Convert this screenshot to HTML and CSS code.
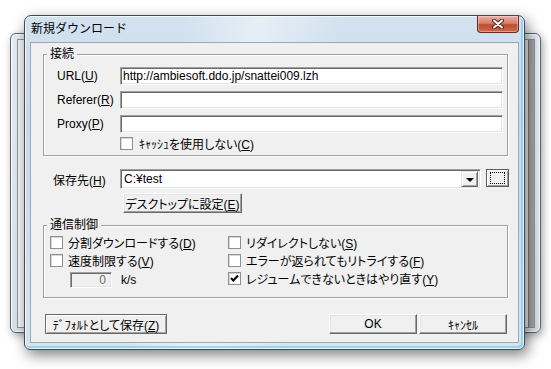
FILE: index.html
```html
<!DOCTYPE html>
<html lang="ja">
<head>
<meta charset="UTF-8">
<meta name="viewport" content="width=device-width, initial-scale=1.0">
<title>新規ダウンロード</title>
<link rel="stylesheet" href="styles.css">
</head>
<body>

<div class="desktop">
    <div class="window back">
        <div class="back-client">
            <div class="back-scroll"></div>
        </div>
    </div>

    <div class="window main">
        <div class="titlebar">
            <span class="title">新規ダウンロード</span>
            <button class="close" title="閉じる">
                <svg width="14" height="10" viewBox="0 0 14 10">
                    <path d="M3 1.5 L11 8.5 M11 1.5 L3 8.5" stroke="#4a2018" stroke-width="4" stroke-linecap="round"/>
                    <path d="M3 1.5 L11 8.5 M11 1.5 L3 8.5" stroke="#fff" stroke-width="2" stroke-linecap="round"/>
                </svg>
            </button>
        </div>

        <div class="client">
            <div class="group connect">
                <span class="group-title">接続</span>
                <div class="row">
                    <label class="lbl">URL(<u>U</u>)</label>
                    <input class="field" type="text" value="http://ambiesoft.ddo.jp/snattei009.lzh" readonly>
                </div>
                <div class="row">
                    <label class="lbl">Referer(<u>R</u>)</label>
                    <input class="field" type="text" value="" readonly>
                </div>
                <div class="row">
                    <label class="lbl">Proxy(<u>P</u>)</label>
                    <input class="field" type="text" value="" readonly>
                </div>
                <div class="row check-row">
                    <span class="box"></span>
                    <span>ｷｬｯｼｭを使用しない(<u>C</u>)</span>
                </div>
            </div>

            <div class="row save-row">
                <label class="lbl">保存先(<u>H</u>)</label>
                <div class="combo">
                    <span class="combo-text">C:¥test</span>
                    <span class="combo-btn"><span class="arrow"></span></span>
                </div>
                <button class="btn browse"><span class="focus"></span></button>
            </div>

            <button class="btn desk-btn">デスクトップに設定(<u>E</u>)</button>

            <div class="group comm">
                <span class="group-title">通信制御</span>
                <div class="comm-grid">
                    <div class="row check"><span class="box"></span><span>分割ダウンロードする(<u>D</u>)</span></div>
                    <div class="row check"><span class="box"></span><span>リダイレクトしない(<u>S</u>)</span></div>
                    <div class="row check"><span class="box"></span><span>速度制限する(<u>V</u>)</span></div>
                    <div class="row check"><span class="box"></span><span>エラーが返られてもリトライする(<u>F</u>)</span></div>
                    <div class="row speed">
                        <span class="field small">0</span>
                        <span class="unit">k/s</span>
                    </div>
                    <div class="row check">
                        <span class="box checked">
                            <svg width="11" height="11" viewBox="0 0 11 11"><path d="M2 5 L4.3 7.5 L9 2.5" fill="none" stroke="#000" stroke-width="2"/></svg>
                        </span>
                        <span>レジュームできないときはやり直す(<u>Y</u>)</span>
                    </div>
                </div>
            </div>

            <div class="footer">
                <button class="btn btn-default">ﾃﾞﾌｫﾙﾄとして保存(<u>Z</u>)</button>
                <div class="actions">
                    <button class="btn">OK</button>
                    <button class="btn">ｷｬﾝｾﾙ</button>
                </div>
            </div>
        </div>
    </div>
</div>

</body>
</html>
```

FILE: styles.css
```css
body {
    margin: 0;
    background-color: #fff;
    font-family: "Liberation Sans", "Noto Sans CJK JP", sans-serif;
    font-size: 12px;
    font-feature-settings: "palt";
    color: #000;
}

.desktop {
    position: relative;
    width: 551px;
    height: 369px;
    overflow: hidden;
}

.window {
    position: absolute;
    box-sizing: border-box;
}

/* window behind the dialog */
.back {
    left: 10px;
    top: 33px;
    width: 531px;
    height: 300px;
    border: 1px solid #5a636d;
    border-radius: 6px;
    padding: 5px 5px 4px 6px;
    display: flex;
    background: linear-gradient(#e6edf3, #d9e1e9);
    box-shadow: 2px 3px 9px rgba(0, 0, 0, 0.35), inset 0 0 0 1px rgba(255, 255, 255, 0.8);
}

.back-client {
    flex: 1;
    display: flex;
    justify-content: flex-end;
    border: 1px solid #8c98a4;
    background-color: #f4f4f4;
}

.back-scroll {
    width: 5px;
    background-color: #a7a7a7;
    border-left: 1px solid #7c7c7c;
}

/* the dialog */
.main {
    left: 24px;
    top: 15px;
    width: 501px;
    height: 335px;
    border: 1px solid #3e4a57;
    border-radius: 7px 7px 6px 6px;
    padding: 0 5px 6px;
    display: flex;
    flex-direction: column;
    background:
        linear-gradient(100deg, rgba(255, 255, 255, 0) 28%, rgba(255, 255, 255, 0.45) 42%, rgba(255, 255, 255, 0) 58%),
        linear-gradient(#d3e2f0, #c6d9ea 30%, #d4e4f1);
    box-shadow: 3px 5px 14px rgba(0, 0, 0, 0.5), inset 0 0 0 1px rgba(255, 255, 255, 0.75), inset -2px -2px 0 1px rgba(110, 196, 236, 0.55);
}

.titlebar {
    flex: none;
    height: 26px;
    display: flex;
    justify-content: space-between;
    align-items: flex-start;
}

.title {
    padding: 5px 0 0 1px;
    line-height: 14px;
    font-family: "Noto Sans CJK JP", sans-serif;
    font-feature-settings: normal;
    color: #000;
}

.close {
    width: 42px;
    height: 17px;
    padding: 0;
    border: 1px solid #6a2a1f;
    border-top: none;
    border-radius: 0 0 4px 4px;
    display: flex;
    align-items: center;
    justify-content: center;
    background: linear-gradient(#e8b0a4, #d77f6c 45%, #c04a33 55%, #cf6a4f);
    box-shadow: inset 0 0 0 1px rgba(255, 255, 255, 0.35);
}

.client {
    flex: 1;
    border: 1px solid #9aa9b8;
    background-color: #f0f0f0;
}

.row {
    display: flex;
    align-items: center;
}

.lbl {
    flex: none;
    width: 63px;
    white-space: nowrap;
}

/* group boxes */
.group {
    position: relative;
    margin: 11px 10px 0 12px;
    border: 1px solid #a0a0a0;
    box-shadow: inset 1px 1px 0 #fff, 1px 1px 0 #fff;
}

.group-title {
    position: absolute;
    top: -8px;
    left: 3px;
    padding: 0 3px;
    line-height: 14px;
    background-color: #f0f0f0;
}

.connect {
    padding: 12px 4px 5px 13px;
}

.connect .row {
    height: 18px;
    margin-bottom: 6px;
}

.connect .check-row {
    height: 13px;
    margin: -2px 0 0 63px;
}

.check-row .box {
    margin-right: 6px;
}

.field {
    box-sizing: border-box;
    flex: 1;
    height: 18px;
    padding: 0 2px;
    font: inherit;
    color: #000;
    background-color: #fff;
    border: 1px solid;
    border-color: #a0a0a0 #fff #fff #a0a0a0;
    box-shadow: inset 1px 1px 0 #696969, inset -1px -1px 0 #e3e3e3;
    outline: none;
}

.box {
    box-sizing: border-box;
    flex: none;
    width: 13px;
    height: 13px;
    margin-right: 5px;
    display: flex;
    align-items: center;
    justify-content: center;
    background-color: #fff;
    border: 1px solid #8e8f8f;
    box-shadow: inset 1px 1px 0 #d8d8d8;
}

/* save folder */
.save-row {
    height: 20px;
    margin: 13px 0 0 22px;
}

.save-row .lbl {
    width: 67px;
}

.combo {
    box-sizing: border-box;
    width: 361px;
    height: 20px;
    padding: 2px;
    display: flex;
    align-items: center;
    background-color: #fff;
    border: 1px solid;
    border-color: #a0a0a0 #fff #fff #a0a0a0;
    box-shadow: inset 1px 1px 0 #696969, inset -1px -1px 0 #e3e3e3;
}

.combo-text {
    flex: 1;
    padding-left: 1px;
}

.combo-btn {
    box-sizing: border-box;
    width: 17px;
    height: 16px;
    display: flex;
    align-items: center;
    justify-content: center;
    background-color: #f0f0f0;
    border: 1px solid;
    border-color: #e3e3e3 #696969 #696969 #e3e3e3;
    box-shadow: inset 1px 1px 0 #fff, inset -1px -1px 0 #a0a0a0;
}

.arrow {
    width: 0;
    height: 0;
    border-left: 4px solid transparent;
    border-right: 4px solid transparent;
    border-top: 4px solid #000;
    margin-top: 1px;
}

.btn {
    box-sizing: border-box;
    height: 20px;
    padding: 0;
    font: inherit;
    color: #000;
    background-color: #f0f0f0;
    border: 1px solid;
    border-color: #fff #696969 #696969 #fff;
    box-shadow: inset -1px -1px 0 #a0a0a0, inset 1px 1px 0 #e3e3e3;
}

.browse {
    align-self: flex-start;
    width: 23px;
    height: 18px;
    margin-left: 5px;
    padding: 2px 3px;
    border-color: #5a5a5a;
    box-shadow: inset 1px 1px 0 #fff, inset -1px -1px 0 #a0a0a0;
}

.focus {
    display: block;
    height: 100%;
    box-sizing: border-box;
    border: 1px dotted #000;
}

.desk-btn {
    display: block;
    width: 119px;
    margin: 4px 0 0 92px;
}

/* connection control */
.comm {
    margin-top: 12px;
    padding: 10px 4px 12px 6px;
}

.comm-grid {
    display: grid;
    grid-template-columns: 178px 1fr;
    grid-template-rows: 13px 13px 13px;
    row-gap: 5px;
}

.comm-grid .row {
    height: 13px;
    white-space: nowrap;
}

.speed {
    align-self: start;
    margin: 1px 0 0 20px;
}

.field.small {
    flex: none;
    width: 42px;
    height: 16px;
    line-height: 14px;
    padding: 0 5px;
    text-align: right;
    color: #6d6d6d;
    background-color: #f0f0f0;
}

.unit {
    margin-left: 9px;
}

.footer {
    display: flex;
    justify-content: space-between;
    margin-top: 16px;
    padding: 0 11px 0 14px;
}

.btn-default {
    width: 122px;
    border-color: #696969;
    box-shadow: inset 1px 1px 0 #fff, inset -1px -1px 0 #a0a0a0;
}

.actions {
    display: flex;
    gap: 2px;
}

.actions .btn {
    width: 88px;
}
```
